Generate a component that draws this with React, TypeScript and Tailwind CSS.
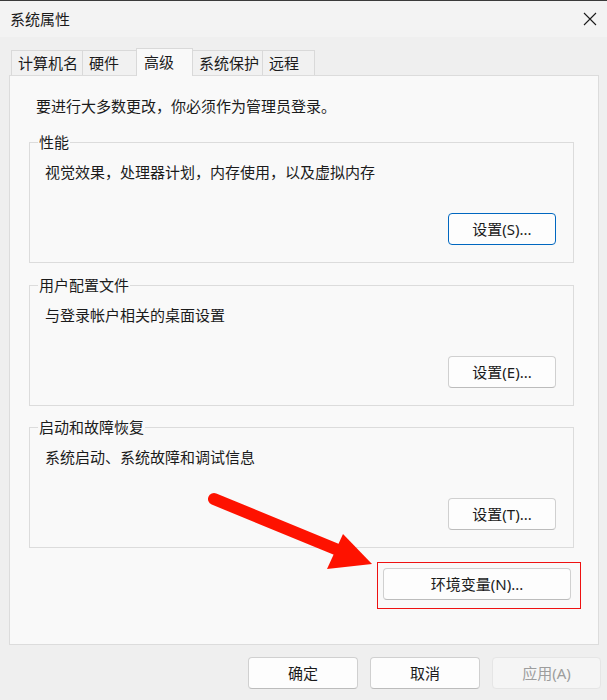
import type { ReactNode } from "react";

const FONT = "font-['Segoe_UI','Noto_Sans','Noto_Sans_CJK_SC',sans-serif]";

const TABS = [
  { label: "计算机名", w: "w-[72px]" },
  { label: "硬件", w: "w-[55px]" },
  { label: "高级", w: "w-[57px]", active: true },
  { label: "系统保护", w: "w-[71px]" },
  { label: "远程", w: "w-[53px]" },
];

function Button({
  children,
  primary,
  disabled,
  className = "",
}: {
  children: ReactNode;
  primary?: boolean;
  disabled?: boolean;
  className?: string;
}) {
  const tone = disabled
    ? "bg-[#f5f5f5] border-[#e5e5e5] text-[#9d9d9d]"
    : primary
      ? "bg-[#fdfdfd] border-[#0067c0] text-[#1b1b1b]"
      : "bg-[#fdfdfd] border-[#d0d0d0] border-b-[#bcbcbc] text-[#1b1b1b]";
  return (
    <button
      type="button"
      className={`h-[32px] rounded-[4px] border text-[15px] leading-[20px] flex items-center justify-center ${tone} ${className}`}
    >
      {children}
    </button>
  );
}

function GroupBox({
  title,
  desc,
  action,
  className = "",
}: {
  title: string;
  desc: string;
  action: string;
  className?: string;
}) {
  return (
    <div
      className={`relative h-[121px] mr-[7px] border border-[#dcdcdc] flex flex-col pt-[19px] pl-[15px] pr-[17px] pb-[17px] ${className}`}
    >
      <span className="absolute left-[8px] top-[-11px] px-[1px] bg-[#f9f9f9] leading-[20px]">
        {title}
      </span>
      <p className="leading-[20px]">{desc}</p>
      <Button className="mt-auto self-end w-[108px]" primary={action === "设置(S)..."}>
        {action}
      </Button>
    </div>
  );
}

export default function App() {
  return (
    <div
      className={`relative w-[607px] h-[700px] bg-[#efefef] border-t border-[#3a3a3a] text-[15px] text-[#1b1b1b] flex flex-col ${FONT}`}
    >
      {/* title bar */}
      <div className="h-[36px] bg-[#f3f3f3] flex items-center justify-between pl-[10px] pr-[10px]">
        <span className="leading-[20px]">系统属性</span>
        <svg width="14" height="14" viewBox="0 0 14 14">
          <path d="M1 1 L13 13 M13 1 L1 13" stroke="#1b1b1b" strokeWidth="1.1" />
        </svg>
      </div>

      {/* tabs */}
      <div className="mt-[11px] pl-[11px] h-[27px] flex items-end">
        {TABS.map((t, i) => (
          <div
            key={t.label}
            className={`${t.w} ${i > 0 ? "-ml-[1px]" : ""} flex items-center pl-[6px] border border-b-0 border-[#d9d9d9] leading-[20px] ${
              t.active
                ? "relative z-10 h-[28px] -mb-[1px] bg-[#f9f9f9] pb-[2px] pl-[7px]"
                : "h-[25px] bg-[#f1f1f1]"
            }`}
          >
            {t.label}
          </div>
        ))}
      </div>

      {/* page */}
      <div className="ml-[9px] mr-[8px] h-[570px] bg-[#f9f9f9] border border-[#dcdcdc] flex flex-col pt-[20px] pl-[19px] pr-[17px]">
        <p className="ml-[7px] leading-[20px]">要进行大多数更改，你必须作为管理员登录。</p>
        <GroupBox
          className="mt-[26px]"
          title="性能"
          desc="视觉效果，处理器计划，内存使用，以及虚拟内存"
          action="设置(S)..."
        />
        <GroupBox className="mt-[22px]" title="用户配置文件" desc="与登录帐户相关的桌面设置" action="设置(E)..." />
        <GroupBox className="mt-[21px]" title="启动和故障恢复" desc="系统启动、系统故障和调试信息" action="设置(T)..." />
        <div className="mt-[14px] self-end border border-[#ee1111] pt-[5px] pl-[5px] pr-[9px] pb-[8px]">
          <Button className="w-[188px]">环境变量(N)...</Button>
        </div>
      </div>

      {/* dialog buttons */}
      <div className="mt-[12px] pr-[6px] flex justify-end gap-[12px]">
        <Button className="w-[110px]">确定</Button>
        <Button className="w-[110px]">取消</Button>
        <Button className="w-[109px]" disabled>
          应用(A)
        </Button>
      </div>

      {/* red pointer drawn over the dialog */}
      <svg
        className="absolute left-0 top-0 pointer-events-none"
        width="607"
        height="700"
        viewBox="0 0 607 700"
      >
        <line x1="214" y1="498" x2="338" y2="549" stroke="#fe1200" strokeWidth="12" strokeLinecap="round" />
        <polygon points="343,533 327,568 372,563" fill="#fe1200" />
      </svg>
    </div>
  );
}
